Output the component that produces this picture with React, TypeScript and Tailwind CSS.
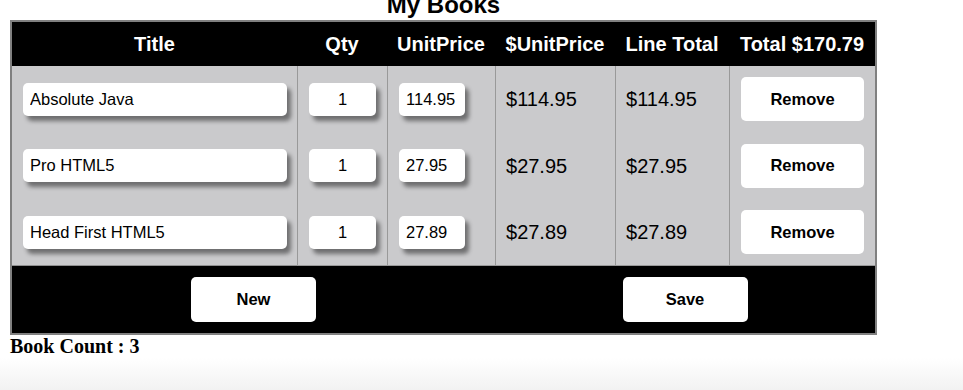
import React, { useState } from 'react';

interface Book {
  id: number;
  title: string;
  qty: number;
  price: number;
}

const initialBooks: Book[] = [
  { id: 1, title: 'Absolute Java', qty: 1, price: 114.95 },
  { id: 2, title: 'Pro HTML5', qty: 1, price: 27.95 },
  { id: 3, title: 'Head First HTML5', qty: 1, price: 27.89 },
];

const inputCls =
  'h-[33px] rounded-[5px] bg-white px-[7px] text-[16.5px] text-black outline-none shadow-[4px_5px_4px_rgba(0,0,0,0.45)]';

const App: React.FC = () => {
  const [books, setBooks] = useState<Book[]>(initialBooks);

  const total = books.reduce((sum, b) => sum + b.qty * b.price, 0);

  return (
    <div className="min-h-[390px] bg-white font-['Liberation_Sans',Arial,sans-serif] text-black">
      <div className="w-[867px] ml-[10px]">
        {/* Title sits partly above the viewport */}
        <h1 className="-mt-[9px] mb-[1px] text-center text-[24px] font-bold leading-[28px]">My Books</h1>

        <table className="w-[867px] table-fixed border-separate border-spacing-0 border-2 border-[#808080]">
          <colgroup>
            <col className="w-[285px]" />
            <col className="w-[90px]" />
            <col className="w-[108px]" />
            <col className="w-[120px]" />
            <col className="w-[114px]" />
            <col className="w-[146px]" />
          </colgroup>
          <thead>
            <tr className="h-[44px] bg-black text-white text-[20px] font-bold">
              <th className="p-0">Title</th>
              <th className="p-0">Qty</th>
              <th className="p-0">UnitPrice</th>
              <th className="p-0 whitespace-nowrap">$UnitPrice</th>
              <th className="p-0 whitespace-nowrap">Line Total</th>
              <th className="p-0 whitespace-nowrap">Total ${total.toFixed(2)}</th>
            </tr>
          </thead>
          <tbody className="bg-[#cacacc]">
            {books.map((b, i) => {
              const last = i === books.length - 1;
              const cell = `p-0 align-middle ${last ? 'border-b border-[#8f8f8f]' : ''}`;
              return (
                <tr key={b.id} className={i === 0 ? 'h-[66px]' : 'h-[67px]'}>
                  <td className={`${cell} pl-[11px]`}>
                    <input className={`${inputCls} w-[264px]`} defaultValue={b.title} />
                  </td>
                  <td className={`${cell} border-l border-[#999] pl-[11px]`}>
                    <input className={`${inputCls} w-[67px] text-center`} defaultValue={b.qty} />
                  </td>
                  <td className={`${cell} border-l border-[#999] pl-[11px]`}>
                    <input className={`${inputCls} w-[66px] px-[6px]`} defaultValue={b.price.toFixed(2)} />
                  </td>
                  <td className={`${cell} border-l border-[#999] pl-[10px] text-[20px]`}>${b.price.toFixed(2)}</td>
                  <td className={`${cell} border-l border-[#999] pl-[10px] text-[20px]`}>
                    ${(b.qty * b.price).toFixed(2)}
                  </td>
                  <td className={`${cell} border-l border-[#999] pl-[11px]`}>
                    <button
                      className="h-[44px] w-[123px] rounded-[5px] bg-white text-[16.5px] font-bold"
                      onClick={() => setBooks(books.filter((x) => x.id !== b.id))}
                    >
                      Remove
                    </button>
                  </td>
                </tr>
              );
            })}
          </tbody>
          <tfoot>
            <tr className="h-[67px] bg-black">
              <td colSpan={3} className="p-0 text-center align-middle">
                <button className="h-[45px] w-[125px] rounded-[5px] bg-white text-[16.5px] font-bold">New</button>
              </td>
              <td colSpan={3} className="p-0 text-center align-middle">
                <button className="h-[45px] w-[125px] rounded-[5px] bg-white text-[16.5px] font-bold">Save</button>
              </td>
            </tr>
          </tfoot>
        </table>

        <p className="font-['Liberation_Serif','Times_New_Roman',serif] text-[20px] font-bold leading-[23px]">
          Book Count : {books.length}
        </p>
      </div>
      <div className="h-[32px] bg-gradient-to-b from-white to-[#f2f2f2]" />
    </div>
  );
};

export default App;
